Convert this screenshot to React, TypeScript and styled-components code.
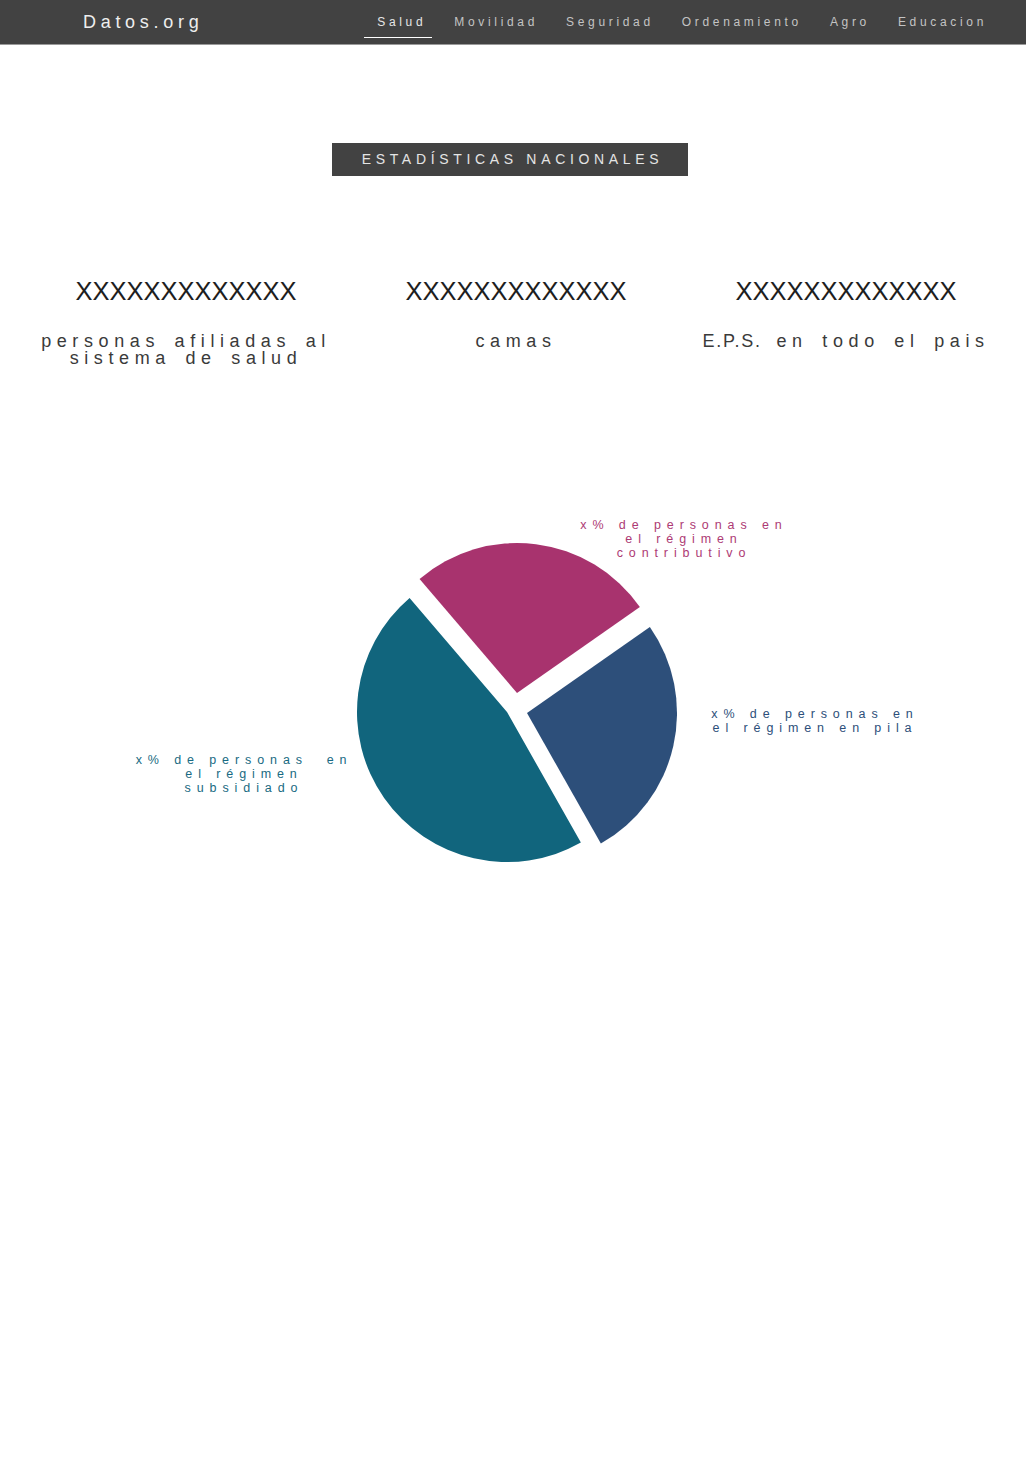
import styled, { createGlobalStyle } from "styled-components";

const GlobalStyle = createGlobalStyle`
    html, body {
        margin: 0;
        padding: 0;
        background: #fff;
        font-family: "Liberation Sans", Arial, sans-serif;
    }
`

const links = ["Salud", "Movilidad", "Seguridad", "Ordenamiento", "Agro", "Educacion"];

const slices = [
    {color: "#11657d", cx: 507, cy: 712, from: 60.5, to: 229.5},
    {color: "#a8336e", cx: 517, cy: 693, from: -130.5, to: -35},
    {color: "#2d4f7a", cx: 527, cy: 713, from: -35, to: 60.5},
];

const R = 150;

const slicePath = (cx: number, cy: number, from: number, to: number) => {
    const rad = (d: number) => (d * Math.PI) / 180;
    const x0 = cx + R * Math.cos(rad(from));
    const y0 = cy + R * Math.sin(rad(from));
    const x1 = cx + R * Math.cos(rad(to));
    const y1 = cy + R * Math.sin(rad(to));
    const large = to - from > 180 ? 1 : 0;
    return `M${cx} ${cy} L${x0} ${y0} A${R} ${R} 0 ${large} 1 ${x1} ${y1} Z`;
};

export default function App() {
    return (
        <>
            <GlobalStyle/>
            <Navbar>
                <Brand>Datos.org</Brand>
                <Nav>
                    {links.map((l, i) => (
                        <NavLink key={l} $active={i === 0}>{l}</NavLink>
                    ))}
                </Nav>
            </Navbar>

            <Main>
                <SectionTitle>ESTADÍSTICAS NACIONALES</SectionTitle>

                <Stats>
                    <Stat>
                        <Value>XXXXXXXXXXXXX</Value>
                        <Label>personas afiliadas al sistema de salud</Label>
                    </Stat>
                    <Stat>
                        <Value>XXXXXXXXXXXXX</Value>
                        <Label>camas</Label>
                    </Stat>
                    <Stat>
                        <Value>XXXXXXXXXXXXX</Value>
                        <Label><Abbr>E.P.S.</Abbr> en todo el pais</Label>
                    </Stat>
                </Stats>

                <Chart>
                    <PieSvg width="340" height="340" viewBox="347 533 340 340">
                        {slices.map(s => (
                            <path key={s.color} d={slicePath(s.cx, s.cy, s.from, s.to)} fill={s.color}/>
                        ))}
                    </PieSvg>
                    <ChartLabel $color="#ad3a74" $left={576} $top={-15.5} $width={216}>
                        x% de personas en el régimen contributivo
                    </ChartLabel>
                    <ChartLabel $color="#2d4f7a" $left={707} $top={173.5} $width={216}>
                        x% de personas en el régimen en pila
                    </ChartLabel>
                    <ChartLabel $color="#186a82" $left={129} $top={219.5} $width={230}>
                        {"x% de personas\u00a0 en el régimen subsidiado"}
                    </ChartLabel>
                </Chart>
            </Main>
        </>
    );
}

const Navbar = styled.header`
    display: flex;
    align-items: center;
    height: 44px;
    padding: 0 25px 0 83px;
    background-color: #424242;
    border-bottom: 1px solid #9a9a9a;
`

const Brand = styled.a`
    font-size: 18px;
    letter-spacing: 4.7px;
    color: #eeeeee;
`

const Nav = styled.nav`
    display: flex;
    margin-left: auto;
    height: 44px;
`

const NavLink = styled.a<{ $active?: boolean }>`
    position: relative;
    padding: 0 14px;
    line-height: 44px;
    font-size: 12px;
    letter-spacing: 3.67px;
    color: ${p => (p.$active ? "#e6e6e6" : "#c4c4c4")};

    &::after {
        content: "";
        display: ${p => (p.$active ? "block" : "none")};
        position: absolute;
        left: 1px;
        right: 8px;
        top: 37px;
        height: 1px;
        background: #fff;
    }
`

const Main = styled.main`
    padding-top: 98px;
    min-height: 1330px;
`

const SectionTitle = styled.h2`
    display: table;
    margin: 0 auto;
    padding: 0 25px 0 30px;
    height: 32px;
    line-height: 33px;
    font-size: 14px;
    font-weight: normal;
    letter-spacing: 4.67px;
    color: #e4e4e4;
    background-color: #424242;
    transform: translateX(-3px);
`

const Stats = styled.section`
    display: grid;
    grid-template-columns: repeat(3, 330px);
    width: 990px;
    margin: 100px 0 0 21px;
`

const Stat = styled.div`
    padding: 0 15px;
    text-align: center;
`

const Value = styled.div`
    font-size: 25.5px;
    line-height: 30px;
    color: #1e1e1e;
`

const Label = styled.p`
    margin: 27px 0 0;
    font-size: 18px;
    line-height: 17px;
    letter-spacing: 5.6px;
    word-spacing: 4px;
    color: #3a3a3a;
`

const Abbr = styled.span`
    letter-spacing: 1.8px;
`

const Chart = styled.section`
    position: relative;
    display: flex;
    justify-content: center;
    margin-top: 166px;
    padding-left: 8px;
`

const PieSvg = styled.svg`
    display: block;
`

const ChartLabel = styled.p<{ $color: string; $left: number; $top: number; $width: number }>`
    position: absolute;
    left: ${p => p.$left}px;
    top: ${p => p.$top}px;
    width: ${p => p.$width}px;
    margin: 0;
    text-align: center;
    font-size: 12.5px;
    line-height: 14px;
    letter-spacing: 5.9px;
    color: ${p => p.$color};
`
